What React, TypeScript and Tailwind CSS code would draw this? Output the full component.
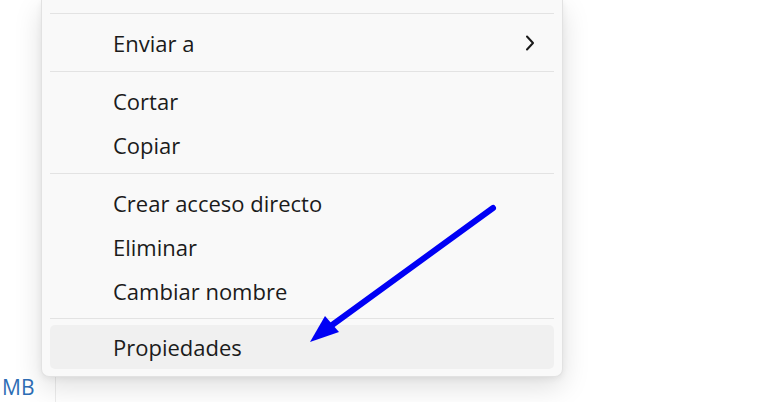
import React from 'react';

// Context menu (Windows 11 style) with a pointer arrow on "Propiedades".

type Item = { label: string; submenu?: boolean; active?: boolean };

const groups: { items: Item[]; sepClass: string }[] = [
  { items: [{ label: 'Enviar a', submenu: true }], sepClass: 'mt-[6px] mb-[7px]' },
  { items: [{ label: 'Cortar' }, { label: 'Copiar' }], sepClass: 'mt-[6px] mb-[7px]' },
  {
    items: [{ label: 'Crear acceso directo' }, { label: 'Eliminar' }, { label: 'Cambiar nombre' }],
    sepClass: 'mt-[5px] mb-[6px]',
  },
  { items: [{ label: 'Propiedades', active: true }], sepClass: '' },
];

const Chevron = () => (
  <svg width="10" height="16" viewBox="0 0 10 16" fill="none" className="text-[#1a1a1a]">
    <path d="M2 1.5 L8 8 L2 14.5" stroke="currentColor" strokeWidth="2" strokeLinecap="round" strokeLinejoin="round" />
  </svg>
);

const MenuRow: React.FC<{ item: Item }> = ({ item }) => (
  <div
    className={`flex h-[44px] items-center rounded-[5px] pl-[63px] pr-[19px] ${
      item.active ? 'bg-[#f0f0f0]' : ''
    }`}
  >
    <span className="text-[22px] leading-none text-[#1b1b1b]">{item.label}</span>
    {item.submenu && (
      <span className="ml-auto flex">
        <Chevron />
      </span>
    )}
  </div>
);

export default function App() {
  return (
    <div
      className="relative h-[402px] w-[775px] overflow-hidden bg-white"
      style={{ fontFamily: '"Segoe UI", "Open Sans", "Noto Sans", sans-serif' }}
    >
      {/* file list behind the menu */}
      <div className="flex h-full flex-col justify-end">
        <div className="flex h-[27px] items-start">
          <div className="w-[55px] pl-[2px] pt-[0px] text-[21px] leading-[24px] text-[#2d6db5]">MB</div>
          <div className="h-full border-l border-[#ececec]" />
        </div>
      </div>

      {/* context menu */}
      <div className="absolute left-[41px] top-0 w-[522px] rounded-b-[8px] border border-t-0 border-[#e2e2e2] bg-[#f9f9f9] px-[8px] pb-[7px] shadow-[0_10px_28px_rgba(0,0,0,0.13),0_2px_6px_rgba(0,0,0,0.06)]">
        <div className="h-[7px]" />
        <div className="mt-[6px] mb-[7px] h-px bg-[#e3e3e3]" />
        {groups.map((g, gi) => (
          <div key={gi}>
            {g.items.map((item) => (
              <MenuRow key={item.label} item={item} />
            ))}
            {gi < groups.length - 1 && <div className={`${g.sepClass} h-px bg-[#e3e3e3]`} />}
          </div>
        ))}
      </div>

      {/* annotation arrow */}
      <svg className="pointer-events-none absolute inset-0" width="775" height="402" viewBox="0 0 775 402">
        <line x1="493" y1="208" x2="328" y2="328" stroke="#0000f5" strokeWidth="6" strokeLinecap="round" />
        <polygon points="310,342 325,316 339,332" fill="#0000f5" />
      </svg>
    </div>
  );
}
